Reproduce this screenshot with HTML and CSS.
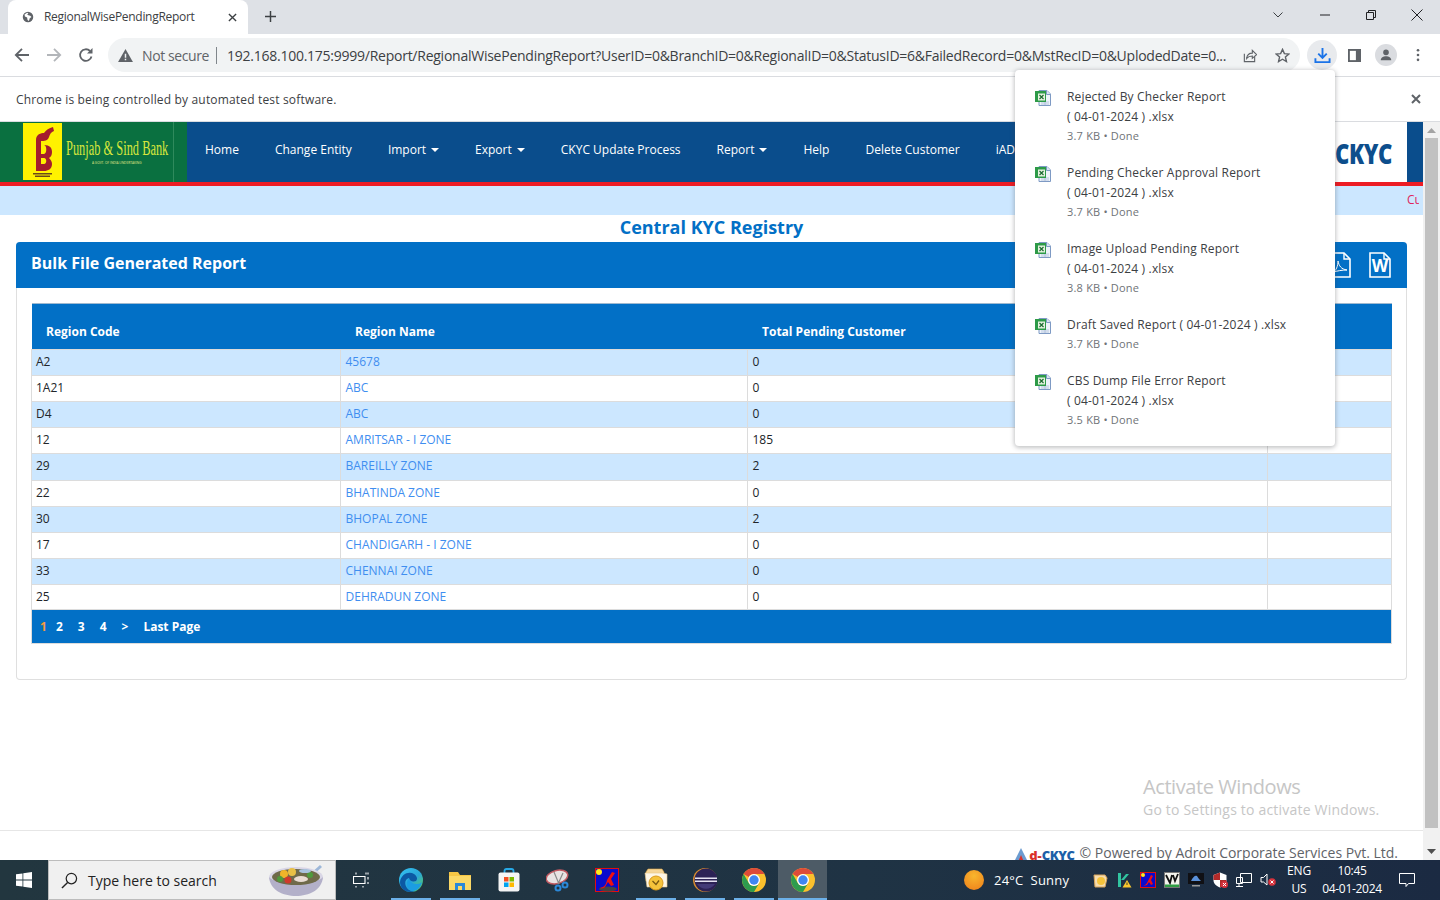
FILE: index.html
```html
<!DOCTYPE html>
<html lang="en">
<head>
<meta charset="utf-8">
<title>RegionalWisePendingReport</title>
<link rel="stylesheet" href="styles.css">
</head>
<body>
<svg class="defs" aria-hidden="true">
  <symbol id="chrome" viewBox="2 2 20 20">
    <circle cx="12" cy="12" r="10" fill="#fbc02d"/>
    <path d="M3.34 7A10 10 0 0 0 12 22l4.33-7.5a5 5 0 0 1-8.66 0Z" fill="#2e9c4e"/>
    <path d="M12 2a10 10 0 0 1 8.66 5H12a5 5 0 0 0-4.33 2.5L3.34 7A10 10 0 0 1 12 2Z" fill="#dd4b39"/>
    <circle cx="12" cy="12" r="5" fill="#fff"/><circle cx="12" cy="12" r="3.9" fill="#3f86f2"/>
  </symbol>
  <symbol id="xls" viewBox="0 0 16 16">
    <path d="M4 .5h8l3.500 3.500v11.500H4Z" fill="#eef3fa" stroke="#7e9ac4"/>
    <path d="M11.500 .5v4h4" fill="#dbe5f3" stroke="#7e9ac4"/>
    <path d="M6 12h8M6 14h8M10 10v5" stroke="#a9bbd8" stroke-width=".8"/>
    <rect x="0" y="1" width="11" height="11" fill="#2d9a48"/>
    <rect x="3" y="3.500" width="7" height="7" fill="#e6f3e0"/>
    <path d="M4.500 5l4 4M8.500 5l-4 4" stroke="#1c6a30" stroke-width="1.200"/>
  </symbol>
</svg>

<header class="tabstrip">
  <div class="tab">
    <svg class="favicon" viewBox="0 0 16 16"><circle cx="8" cy="8" r="6" fill="#5f6368"/><path d="M7 3.200 4 5l.5 2.500 2.500 1 .5 3 1.500 1 1-3 2-1.500-1.500-1.500-2-.5L7 5l1.500-1Z" fill="#fff"/></svg>
    <span class="tab-title">RegionalWisePendingReport</span>
    <svg class="tab-close" viewBox="0 0 10 10"><path d="M1 1l8 8M9 1 1 9" stroke="#3c4043" stroke-width="1.500"/></svg>
  </div>
  <svg class="tab-new" viewBox="0 0 12 12"><path d="M6 0v12M0 6h12" stroke="#3c4043" stroke-width="1.600"/></svg>
  <div class="win-controls">
    <svg class="win-chevron" viewBox="0 0 10 6"><path d="M.5.500 5 5 9.500.500" fill="none" stroke="#3c4043"/></svg>
    <svg class="win-min" viewBox="0 0 10 10"><path d="M0 5h10" stroke="#202124"/></svg>
    <svg class="win-max" viewBox="0 0 10 10"><path d="M.5 2.500h7v7h-7ZM2.500 2.500v-2h7v7h-2" fill="none" stroke="#202124"/></svg>
    <svg class="win-close" viewBox="0 0 12 12"><path d="M.5.500l11 11M11.500.500l-11 11" stroke="#202124"/></svg>
  </div>
</header>

<nav class="toolbar">
  <svg class="tb-btn" viewBox="0 0 16 16"><path d="M15 8H2M8 1.800 1.800 8 8 14.200" fill="none" stroke="#5f6368" stroke-width="1.800"/></svg>
  <svg class="tb-btn" viewBox="0 0 16 16"><path d="M1 8h13M8 1.800 14.200 8 8 14.200" fill="none" stroke="#b3b6ba" stroke-width="1.800"/></svg>
  <svg class="tb-btn" viewBox="0 0 16 16"><path d="M13.500 9.500A5.800 5.800 0 1 1 12 4" fill="none" stroke="#5f6368" stroke-width="1.800"/><path d="M14.500 1v5.500H9Z" fill="#5f6368"/></svg>
  <div class="omnibox">
    <svg class="warn" viewBox="0 0 16 14"><path d="M8 0 16 14H0Z" fill="#5f6368"/><path d="M7.200 5h1.600v4.500H7.200ZM7.200 10.500h1.600V12H7.200Z" fill="#f1f3f4"/></svg>
    <span class="not-secure">Not secure</span>
    <span class="omni-sep"></span>
    <span class="url">192.168.100.175:9999/Report/RegionalWisePendingReport?UserID=0&amp;BranchID=0&amp;RegionalID=0&amp;StatusID=6&amp;FailedRecord=0&amp;MstRecID=0&amp;UplodedDate=0...</span>
    <svg class="omni-icon" viewBox="0 0 16 16"><path d="M2.500 6v8.500h11V9" fill="none" stroke="#5f6368" stroke-width="1.200"/><path d="M5 11c.5-4 3.500-5.500 6-5.500V2.500L15.500 7 11 11V8.500c-2.500 0-4.500 .5-6 2.500Z" fill="#f1f3f4" stroke="#5f6368" stroke-width="1.200"/></svg>
    <svg class="omni-icon star" viewBox="0 0 16 16"><path d="m8 1.500 2 4.500 4.800.4-3.700 3.200 1.100 4.800L8 12l-4.200 2.400 1.100-4.800L1.200 6.400 6 6Z" fill="none" stroke="#5f6368" stroke-width="1.500"/></svg>
  </div>
  <div class="tb-download">
    <svg viewBox="0 0 18 18"><path d="M9 1v10M4.500 7 9 11.500 13.500 7" fill="none" stroke="#1a73e8" stroke-width="2"/><path d="M1.500 12v4h15v-4" fill="none" stroke="#1a73e8" stroke-width="2"/></svg>
  </div>
  <svg class="tb-panel" viewBox="0 0 14 14"><path d="M0 0h14v14H0Z" fill="#5f6368"/><path d="M2 2h6.500v10H2Z" fill="#fff"/></svg>
  <div class="tb-avatar"><svg viewBox="0 0 16 16"><circle cx="8" cy="5" r="3.200" fill="#5f6368"/><path d="M2 14c0-3 3-4.500 6-4.500S14 11 14 14Z" fill="#5f6368"/></svg></div>
  <svg class="tb-menu" viewBox="0 0 4 16"><circle cx="2" cy="2.500" r="1.500" fill="#5f6368"/><circle cx="2" cy="8" r="1.500" fill="#5f6368"/><circle cx="2" cy="13.500" r="1.500" fill="#5f6368"/></svg>
</nav>

<div class="infobar">
  <span>Chrome is being controlled by automated test software.</span>
  <svg viewBox="0 0 10 10"><path d="M1 1l8 8M9 1 1 9" stroke="#5f6368" stroke-width="2"/></svg>
</div>

<div class="viewport">
  <main class="page">
    <div class="navbar">
      <div class="logo">
        <div class="logo-mark">
          <svg viewBox="0 0 39 57"><path d="M13 40V17c0-6 5-7 8-7 2-3 5-5 9-6l1 4c-3 1-4 3-5 6-1 4-5 4-8 4v4h3c6 0 8 3 8 7 0 3-1 5-3 6 2 2 3 4 3 6 0 5-4 7-8 7h-8Zm5-18v9h3c3 0 3-9 0-9Zm0 13v6h3c3 0 3-6 0-6Z" fill="#a51d2d"/><path d="M10 50h19v1.500H10ZM12 52.500h15v1.500H12Z" fill="#6b4a1a"/></svg>
        </div>
        <div class="logo-words">
          <span class="logo-name">Punjab &amp; Sind Bank</span>
          <span class="logo-sub">A GOVT. OF INDIA UNDERTAKING</span>
        </div>
      </div>
      <ul class="menu">
        <li>Home</li><li>Change Entity</li><li class="caret">Import</li><li class="caret">Export</li><li>CKYC Update Process</li><li class="caret">Report</li><li>Help</li><li>Delete Customer</li><li>iAD</li>
      </ul>
      <div class="brand"><span>CKYC</span></div>
    </div>
    <div class="ticker"><div class="ticker-clip"><span>Current</span></div></div>
    <h1 class="registry">Central KYC Registry</h1>

    <section class="card">
      <div class="card-head">
        <h2>Bulk File Generated Report</h2>
        <div class="exports">
          <svg viewBox="0 0 22 26"><path d="M1 1h14l6 6v18H1Z" fill="none" stroke="#fff" stroke-width="1.600"/><path d="M15 1v6h6" fill="none" stroke="#fff" stroke-width="1.400"/><path d="M4 20c3-1 5-6 5-11 1 5 3 8 9 9-5 0-10 1-14 2Z" fill="none" stroke="#fff"/></svg>
          <svg viewBox="0 0 22 26"><path d="M1 1h14l6 6v18H1Z" fill="none" stroke="#fff" stroke-width="1.600"/><path d="M15 1v6h6" fill="none" stroke="#fff" stroke-width="1.400"/><text x="11" y="20" class="word-w">W</text></svg>
        </div>
      </div>
      <div class="card-body">
        <table class="grid">
          <thead>
            <tr><th class="c1">Region Code</th><th class="c2">Region Name</th><th class="c3">Total Pending Customer</th><th class="c4"></th></tr>
          </thead>
          <tbody>
            <tr><td>A2</td><td><a>45678</a></td><td>0</td><td></td></tr>
            <tr><td>1A21</td><td><a>ABC</a></td><td>0</td><td></td></tr>
            <tr><td>D4</td><td><a>ABC</a></td><td>0</td><td></td></tr>
            <tr><td>12</td><td><a>AMRITSAR - I ZONE</a></td><td>185</td><td></td></tr>
            <tr><td>29</td><td><a>BAREILLY ZONE</a></td><td>2</td><td></td></tr>
            <tr><td>22</td><td><a>BHATINDA ZONE</a></td><td>0</td><td></td></tr>
            <tr><td>30</td><td><a>BHOPAL ZONE</a></td><td>2</td><td></td></tr>
            <tr><td>17</td><td><a>CHANDIGARH - I ZONE</a></td><td>0</td><td></td></tr>
            <tr><td>33</td><td><a>CHENNAI ZONE</a></td><td>0</td><td></td></tr>
            <tr><td>25</td><td><a>DEHRADUN ZONE</a></td><td>0</td><td></td></tr>
          </tbody>
        </table>
        <div class="pager"><span class="cur">1</span><span>2</span><span>3</span><span>4</span><span>&gt;</span><span>Last Page</span></div>
      </div>
    </section>

    <footer class="foot">
      <div class="foot-logo">
        <svg viewBox="0 0 14 14"><path d="M7 0 14 14H0Z" fill="#6b9bd0"/><path d="M4 14 7 7l3 7Z" fill="#d9312b"/></svg>
        <span class="foot-d">d-</span><span class="foot-ckyc">CKYC</span>
      </div>
      <span class="foot-copy">© Powered by Adroit Corporate Services Pvt. Ltd.</span>
    </footer>
  </main>
  <aside class="scrollbar">
    <svg class="sb-arrow" viewBox="0 0 9 5"><path d="M4.500 0 9 5H0Z" fill="#a3a3a3"/></svg>
    <div class="sb-thumb"></div>
    <svg class="sb-arrow" viewBox="0 0 9 5"><path d="M0 0h9L4.500 5Z" fill="#505050"/></svg>
  </aside>
  <div class="activate">
    <div class="act-title">Activate Windows</div>
    <div class="act-sub">Go to Settings to activate Windows.</div>
  </div>
</div>

<div class="dl-popup">
  <div class="dl-item"><svg><use href="#xls"/></svg><div><p>Rejected By Checker Report</p><p>( 04-01-2024 ) .xlsx</p><p class="dl-meta">3.7 KB • Done</p></div></div>
  <div class="dl-item"><svg><use href="#xls"/></svg><div><p>Pending Checker Approval Report</p><p>( 04-01-2024 ) .xlsx</p><p class="dl-meta">3.7 KB • Done</p></div></div>
  <div class="dl-item"><svg><use href="#xls"/></svg><div><p>Image Upload Pending Report</p><p>( 04-01-2024 ) .xlsx</p><p class="dl-meta">3.8 KB • Done</p></div></div>
  <div class="dl-item"><svg><use href="#xls"/></svg><div><p>Draft Saved Report ( 04-01-2024 ) .xlsx</p><p class="dl-meta">3.7 KB • Done</p></div></div>
  <div class="dl-item"><svg><use href="#xls"/></svg><div><p>CBS Dump File Error Report</p><p>( 04-01-2024 ) .xlsx</p><p class="dl-meta">3.5 KB • Done</p></div></div>
</div>

<footer class="taskbar">
  <div class="start"><svg viewBox="0 0 16 16"><path d="M0 2.300 6.500 1.400V7.600H0ZM7.300 1.300 16 0V7.600H7.300ZM0 8.400H6.500V14.600L0 13.700ZM7.300 8.400H16V16L7.300 14.700Z" fill="#fff"/></svg></div>
  <div class="search">
    <svg class="search-glass" viewBox="0 0 18 18"><circle cx="11" cy="7" r="5.500" fill="none" stroke="#222" stroke-width="1.300"/><path d="M7 11 1 17" stroke="#222" stroke-width="1.500"/></svg>
    <span>Type here to search</span>
    <svg class="bowl" viewBox="0 0 56 32">
      <path d="M42 12 53 2" stroke="#9db7d8" stroke-width="3"/>
      <ellipse cx="28" cy="13" rx="27" ry="10" fill="#d9d6e6"/>
      <path d="M1 13c1 13 14 19 27 19s26-6 27-19c-6 8-48 8-54 0Z" fill="#b3b0c9"/>
      <ellipse cx="28" cy="13" rx="24" ry="8" fill="#6f6a4a"/>
      <circle cx="16" cy="10" r="4" fill="#f0b429"/><circle cx="24" cy="8" r="4" fill="#e9c046"/><circle cx="20" cy="16" r="3.500" fill="#d0392b"/><circle cx="12" cy="15" r="3" fill="#4f9a3d"/><ellipse cx="33" cy="15" rx="7" ry="3" fill="#e9dcd3"/><circle cx="42" cy="11" r="3" fill="#4f9a3d"/><ellipse cx="37" cy="7" rx="6" ry="2" fill="#a9c3e0"/>
    </svg>
  </div>
  <div class="slot slot-view"><svg class="ico-sm" viewBox="0 0 16 16"><path d="M3 .5v2M13 .5v2M.5 4.500h11.500v7H.5ZM3 14v1.500M10 14v1.500M15 .5v2M15 5v2.500M15 10v2" fill="none" stroke="#fff" stroke-width="1.100"/></svg></div>
  <div class="slot on"><svg class="ico" viewBox="0 0 24 24"><defs><linearGradient id="edge" x1="0" y1="0" x2="1" y2="1"><stop offset="0" stop-color="#35c1f1"/><stop offset=".55" stop-color="#2aa7d8"/><stop offset="1" stop-color="#62d34a"/></linearGradient></defs><circle cx="12" cy="12" r="12" fill="url(#edge)"/><path d="M1 14C2 6 10 3 15 6c3 2 4 5 2 7-3 1-7 0-7-3-4 1-5 6-2 10 2 3 6 3 8 3-8 3-15-2-15-9Z" fill="#0c59a4"/><path d="M10 10c1 5 5 6 8 6 2 0 4-1 5-2-1 5-5 9-9 9-5 0-9-6-4-13Z" fill="#1b9de2"/></svg></div>
  <div class="slot on"><svg class="ico" viewBox="0 0 24 24"><path d="M1 4h9l2 3h11v15H1Z" fill="#f6c644"/><path d="M1 8h22v14H1Z" fill="#fbd866"/><path d="M7 15h10v7h-3v-4h-4v4H7Z" fill="#2b88d8"/></svg></div>
  <div class="slot"><svg class="ico" viewBox="0 0 24 24"><path d="M7.500 5V3q0-2 2-2h5q2 0 2 2v2" fill="none" stroke="#27a9e6" stroke-width="1.800"/><rect x="1.500" y="4.500" width="21" height="19" rx="2" fill="#f5f5f5"/><rect x="7" y="9" width="4.500" height="4.500" fill="#f25022"/><rect x="12.500" y="9" width="4.500" height="4.500" fill="#7fba00"/><rect x="7" y="14.500" width="4.500" height="4.500" fill="#00a4ef"/><rect x="12.500" y="14.500" width="4.500" height="4.500" fill="#ffb900"/></svg></div>
  <div class="slot"><svg class="ico" viewBox="0 0 24 24"><ellipse cx="11" cy="9" rx="11" ry="6.500" transform="rotate(-15 11 9)" fill="#e9e3e3" stroke="#c25a62" stroke-width="1.500"/><path d="M8 4l5 12M17 5l-5 11" stroke="#8a8a8a" stroke-width="1.200"/><circle cx="12" cy="20" r="2.500" fill="none" stroke="#2b88d8" stroke-width="2"/><circle cx="19" cy="17" r="2.500" fill="none" stroke="#2b88d8" stroke-width="2"/></svg></div>
  <div class="slot"><svg class="ico" viewBox="0 0 24 24"><rect x=".5" y=".5" width="23" height="23" fill="#0a0acc" stroke="#e01010"/><circle cx="4" cy="4" r="3" fill="#ffe81a"/><ellipse cx="13" cy="21" rx="9" ry="2.500" fill="#444"/><path d="M5 20c5-1 6-4 7-8l5-8 3 1-4 6 3 6-3 1-3-4-3 5c-1 1-3 2-5 1Z" fill="#f01010"/></svg></div>
  <div class="slot on"><svg class="ico" viewBox="0 0 24 24"><path d="M2 4 4 1h14l2 3v9H2Z" fill="#f6d79a" stroke="#e0a946" stroke-width=".6"/><path d="M1 5h17l5 1v13H3Z" fill="#fdf6e6" stroke="#e8c888" stroke-width=".6"/><circle cx="12" cy="15" r="7" fill="#f5c33b" stroke="#d99a1c"/><path d="M8.500 13l3.500 3.500 3-4" fill="none" stroke="#7a5a12" stroke-width="1.300"/></svg></div>
  <div class="slot on"><svg class="ico" viewBox="0 0 24 24"><circle cx="12" cy="12" r="12" fill="#d98c2f"/><circle cx="13" cy="12" r="11.500" fill="#2c2255"/><path d="M2 9.500h22v1.500H2ZM2 12.500h22V14H2Z" fill="#e6e3f2"/><path d="M4 16h18a11 11 0 0 1-18 0Z" fill="#433a78"/></svg></div>
  <div class="slot on"><svg class="ico"><use href="#chrome"/></svg></div>
  <div class="slot on active"><svg class="ico"><use href="#chrome"/></svg></div>
  <div class="tray">
    <span class="sun"></span>
    <span class="temp">24°C&nbsp; Sunny</span>
    <div class="tray-icons">
      <svg viewBox="0 0 16 16"><path d="M2 3h11l2 3-2 9H3Z" fill="#f6dcae" stroke="#d6a35a"/><circle cx="9" cy="9" r="4" fill="#f5c33b"/></svg>
      <svg viewBox="0 0 16 16"><path d="M2 1h3v14H2ZM5 8l5-6h3L8 8Z" fill="#31c4a0"/><path d="M11 8l4.500 7.500h-9Z" fill="#f7c62f"/><path d="M10.600 10.500h.8v2.500h-.8Z" fill="#222"/></svg>
      <svg viewBox="0 0 16 16"><rect x=".5" y=".5" width="15" height="15" fill="#0a0acc" stroke="#e01010"/><circle cx="3" cy="3" r="2" fill="#ffe81a"/><path d="M3 14c3-1 4-3 5-5l3-6 2 1-2 4 2 4-2 1-2-3-2 3Z" fill="#f01010"/></svg>
      <svg viewBox="0 0 16 16"><rect x=".5" y=".5" width="15" height="15" fill="#f4f4ee" stroke="#777"/><path d="M2 3l4 8 2-8M9 3l2 6 3-7" fill="none" stroke="#111" stroke-width="1.800"/><path d="M1 12.500h14V15H1Z" fill="#2f9e44"/></svg>
      <svg viewBox="0 0 16 16"><rect x="0" y="1" width="16" height="11" fill="#101014"/><path d="M3 9c2-4 4-6 6-5l2 3 2 2Z" fill="#5a90d8"/><path d="M4 13h8v1.500H4Z" fill="#999"/></svg>
      <svg viewBox="0 0 16 16"><path d="M8 .5 14.500 3v5c0 4-3 6-6.500 7.500C4.500 14 1.500 12 1.500 8V3Z" fill="#fff"/><path d="M8 .5V8H1.500V3ZM8 8h6.500c0 4-3 6-6.500 7.500Z" fill="#b22a2a"/><circle cx="12.500" cy="12.500" r="3.500" fill="#d6323c"/><path d="M11 11l3 3M14 11l-3 3" stroke="#fff"/></svg>
      <svg viewBox="0 0 16 16"><path d="M4.500 1.500h11v9h-11ZM.5 5.500h6v6h-6ZM3 11.500V14M0 14.500h7" fill="#1e2e40" stroke="#fff"/></svg>
      <svg viewBox="0 0 16 16"><path d="M1 5.500h2.500L7 2v11L3.500 10H1Z" fill="none" stroke="#fff"/><circle cx="12" cy="10" r="3.800" fill="#d6323c"/><path d="M10.500 8.500l3 3M13.500 8.500l-3 3" stroke="#fff"/></svg>
    </div>
    <div class="lang"><span>ENG</span><span>US</span></div>
    <div class="clock"><span>10:45</span><span>04-01-2024</span></div>
    <div class="notify"><svg viewBox="0 0 16 16"><path d="M.5 1.500h15v10H9.500L7 14.500v-3H.5Z" fill="none" stroke="#fff"/></svg></div>
  </div>
</footer>
</body>
</html>
```
FILE: styles.css
```css
* { box-sizing: border-box; }
html, body { margin: 0; padding: 0; height: 100%; }
body {
  width: 1440px; height: 900px; overflow: hidden; position: relative;
  display: flex; flex-direction: column; background: #fff;
  font-family: "Open Sans", "Noto Sans", sans-serif; font-size: 12px; color: #212529;
}
.defs { position: absolute; width: 0; height: 0; }
svg { display: block; flex: none; }

/* tab strip */
.tabstrip { height: 34px; background: #dee1e6; display: flex; align-items: flex-end; padding-left: 8px; flex: none; }
.tab { width: 240px; height: 34px; background: #fff; border-radius: 8px 8px 0 0; display: flex; align-items: center; padding: 0 11px 0 13px; }
.favicon { width: 14px; height: 14px; }
.tab-title { margin-left: 9px; flex: 1; font-size: 12px; line-height: 16px; letter-spacing: -.3px; color: #3c4043; }
.tab-close { width: 9px; height: 9px; }
.tab-new { width: 11px; height: 11px; margin: 0 0 12px 17px; }
.win-controls { margin-left: auto; height: 34px; display: flex; align-items: center; padding-right: 17px; }
.win-chevron { width: 10px; height: 6px; margin-right: 37px; margin-bottom: 4px; }
.win-min { width: 10px; height: 10px; margin-right: 36px; margin-bottom: 4px; }
.win-max { width: 10px; height: 10px; margin-right: 35px; margin-bottom: 4px; }
.win-close { width: 12px; height: 12px; margin-bottom: 4px; }

/* toolbar */
.toolbar { height: 43px; flex: none; display: flex; align-items: center; padding: 0 0 0 14px; background: #fff; border-bottom: 1px solid #dadce0; }
.tb-btn { width: 16px; height: 16px; margin-right: 16px; }
.omnibox { width: 1192px; height: 34px; margin-left: -2px; background: #f1f3f4; border-radius: 17px; display: flex; align-items: center; padding-left: 10px; }
.warn { width: 15px; height: 13px; }
.not-secure { margin-left: 9px; font-size: 14px; letter-spacing: -.4px; color: #5f6368; }
.omni-sep { width: 1px; height: 17px; background: #80868b; margin: 0 10px 0 7px; }
.url { width: 999px; white-space: nowrap; overflow: hidden; font-size: 14px; letter-spacing: -.25px; color: #3c4043; }
.omni-icon { width: 15px; height: 15px; margin-left: 16px; }
.omni-icon.star { margin-left: 18px; }
.tb-download { width: 30px; height: 30px; border-radius: 50%; background: #e8eaed; display: flex; align-items: center; justify-content: center; margin-left: 7px; }
.tb-download svg { width: 17px; height: 17px; }
.tb-panel { width: 13px; height: 13px; margin-left: 11px; }
.tb-avatar { width: 22px; height: 22px; margin-left: 14px; border-radius: 50%; background: #dadce0; display: flex; align-items: center; justify-content: center; }
.tb-avatar svg { width: 14px; height: 14px; }
.tb-menu { width: 4px; height: 14px; margin-left: 19px; }

/* infobar */
.infobar { height: 45px; flex: none; background: #fff; border-bottom: 1px solid #dadce0; display: flex; align-items: center; justify-content: space-between; padding: 0 19px 0 16px; font-size: 12px; letter-spacing: .17px; color: #3c4043; }
.infobar svg { width: 10px; height: 10px; }

/* viewport */
.viewport { flex: 1; min-height: 0; display: flex; position: relative; overflow: hidden; }
.page { width: 1423px; display: flex; flex-direction: column; }
.navbar { height: 64px; flex: none; display: flex; background: #0a4d8c; border-bottom: 4px solid #ed1c24; }
.logo { width: 187px; height: 60px; display: flex; padding: 1px 0 2px 23px; background: linear-gradient(90deg, #0a7040 173px, #2f8a5c 173px, #2f8a5c 174px, #0a7040 174px); }
.logo-mark { width: 39px; height: 57px; background: #fff200; }
.logo-mark svg { width: 39px; height: 57px; }
.logo-words { margin-left: 4px; display: flex; flex-direction: column; align-items: flex-start; padding-top: 13px; }
.logo-name { font-family: "Liberation Serif", serif; font-size: 20px; line-height: 24px; color: #d7e63c; white-space: nowrap; transform: scaleX(.62); transform-origin: 0 0; }
.logo-sub { font-size: 4px; line-height: 6px; color: #e4ea8a; white-space: nowrap; margin-left: 26px; transform: scaleX(.8); transform-origin: 0 0; }
.menu { list-style: none; margin: 0; padding: 0 0 0 18px; display: flex; align-items: center; gap: 36px; color: #fff; font-size: 12px; height: 55px; }
.menu li { white-space: nowrap; }
.caret::after { content: ""; display: inline-block; margin-left: 5px; vertical-align: 2px; border: 4px solid transparent; border-top-color: #fff; border-bottom: 0; }
.brand { margin-left: auto; width: 240px; height: 60px; margin-right: 16px; background: #fff; display: flex; align-items: center; justify-content: flex-end; padding: 1px 15px 0 0; }
.brand span { font-size: 28px; line-height: 34px; font-weight: 800; color: #0d4e8c; letter-spacing: -.6px; transform: scaleX(.79); transform-origin: 100% 50%; }
.ticker { height: 29px; flex: none; background: #cce7ff; padding: 0 0 2px 1407px; display: flex; align-items: center; font-size: 12px; color: #e0245e; white-space: nowrap; }
.ticker-clip { width: 12px; overflow: hidden; }
.registry { margin: 0; height: 27px; flex: none; text-align: center; font-size: 18px; line-height: 25px; font-weight: 700; color: #0270c6; }

/* card */
.card { margin: 0 16px; height: 438px; flex: none; border: 1px solid #dfdfdf; border-top: 0; border-radius: 4px; }
.card-head { height: 46px; background: #0270c6; border-radius: 4px 4px 0 0; display: flex; align-items: center; justify-content: space-between; padding: 0 16px 4px 15px; margin: 0 -1px; }
.card-head h2 { margin: 0; font-size: 16px; font-weight: 700; color: #fff; }
.exports { display: flex; gap: 18px; margin-top: 4px; }
.exports svg { width: 22px; height: 26px; }
.word-w { font: 700 17px "Open Sans", sans-serif; fill: #fff; text-anchor: middle; }
.card-body { padding: 15px 15px 0 14px; }
.grid { width: 100%; table-layout: fixed; border-collapse: collapse; }
.grid th { height: 46px; padding: 10px 0 0 14.5px; background: #0270c6; color: #fff; text-align: left; font-size: 12px; font-weight: 700; border-top: 1px solid #9fb9d0; }
.c1 { width: 309px; } .c2 { width: 407px; } .c3 { width: 520px; } .c4 { width: 124px; }
.grid td { height: 26px; padding: 0 4.5px 2px; border: 1px solid #dcdcdc; font-size: 12px; color: #212529; line-height: 16px; }
.grid td:first-child { padding-left: 4px; }
.grid tbody tr:nth-child(5) td { height: 27px; }
.grid tbody tr:nth-child(10) td { height: 25px; padding-bottom: 0; }
.grid tbody tr:nth-child(odd) td { background: #cce7ff; }
.grid a { color: #3f8ef0; }
.pager { height: 34px; margin-right: -1px; background: #0270c6; border: 1px solid #dcdcdc; border-top: 0; display: flex; align-items: center; padding: 0 0 1px 8px; gap: 15px; color: #fff; font-size: 12px; font-weight: 700; }
.pager .cur { color: #f79a3e; margin-right: -6px; }

/* footer of the page */
.foot { margin-top: auto; height: 30px; flex: none; border-top: 1px solid #e6e6e6; display: flex; justify-content: flex-end; align-items: flex-start; padding: 12px 25px 0 0; overflow: hidden; }
.foot-logo { display: flex; align-items: center; margin-right: 5px; font-weight: 800; font-size: 13px; line-height: 20px; padding-top: 2px; }
.foot-logo svg { width: 14px; height: 14px; }
.foot-d { color: #d9312b; margin-left: 1px; }
.foot-ckyc { color: #1d5fa8; letter-spacing: -.4px; }
.foot-copy { font-size: 14px; line-height: 20px; color: #5f6368; white-space: nowrap; }

/* scrollbar */
.scrollbar { width: 17px; background: #f1f1f1; display: flex; flex-direction: column; align-items: center; padding: 6px 0; }
.sb-arrow { width: 9px; height: 5px; flex: none; }
.sb-thumb { width: 13px; height: 690px; background: #c1c1c1; margin: 5px 0 auto; }

/* activate */
.activate { position: absolute; left: 1143px; top: 652px; color: #c6c6c6; white-space: nowrap; }
.act-title { font-size: 20px; line-height: 26px; letter-spacing: -.42px; }
.act-sub { font-size: 14px; line-height: 20px; letter-spacing: .2px; }

/* download popup */
.dl-popup { position: absolute; left: 1015px; top: 70px; width: 320px; height: 376px; background: #fff; border-radius: 4px; box-shadow: 0 1px 4px 1px rgba(60,64,67,.3); padding: 17px 20px 0; display: flex; flex-direction: column; gap: 16px; }
.dl-item { display: flex; gap: 16px; }
.dl-item svg { width: 16px; height: 16px; margin-top: 3px; }
.dl-item p { margin: 0; font-size: 12px; line-height: 20px; letter-spacing: .17px; color: #3c4043; white-space: nowrap; }
.dl-item .dl-meta { font-size: 11px; color: #6f7377; line-height: 18px; margin-bottom: 2px; letter-spacing: .2px; }

/* taskbar */
.taskbar { height: 40px; flex: none; display: flex; background: linear-gradient(90deg, #22363f, #1f3344 60%, #1b2a42); color: #fff; }
.start { width: 48px; display: flex; align-items: center; justify-content: center; }
.start svg { width: 16px; height: 16px; }
.search { width: 288px; background: #f0f0f0; border: 1px solid #bcbcbc; display: flex; align-items: center; padding-left: 12px; color: #222; font-size: 14px; }
.search-glass { width: 17px; height: 17px; margin-right: 10px; }
.search span { flex: 1; }
.bowl { width: 56px; height: 32px; margin-right: 11px; }
.slot { width: 49px; display: flex; align-items: center; justify-content: center; position: relative; padding-bottom: 1px; }
.slot-view { width: 50px; }
.ico { width: 24px; height: 24px; }
.ico-sm { width: 16px; height: 16px; }
.slot.on::after { content: ""; position: absolute; left: 5px; right: 4px; bottom: 0; height: 2px; background: #6cb0e8; }
.slot.active { background: #4d5b66; }
.slot.active::after { left: 0; right: 0; }
.tray { margin-left: auto; display: flex; align-items: center; font-size: 13px; }
.sun { width: 20px; height: 20px; border-radius: 50%; background: radial-gradient(circle at 50% 30%, #f8b62d, #ee7d1a); margin-right: 10px; }
.temp { width: 76px; white-space: nowrap; letter-spacing: .2px; margin-right: 18px; }
.tray-icons { display: flex; width: 192px; }
.tray-icons svg { width: 16px; height: 16px; margin: 0 4px; }
.lang, .clock { display: flex; flex-direction: column; align-items: center; font-size: 12px; line-height: 18px; letter-spacing: -.2px; }
.lang { width: 38px; }
.clock { width: 68px; letter-spacing: -.3px; }
.notify { width: 42px; display: flex; justify-content: center; margin-right: 12px; }
.notify svg { width: 16px; height: 16px; }
```
